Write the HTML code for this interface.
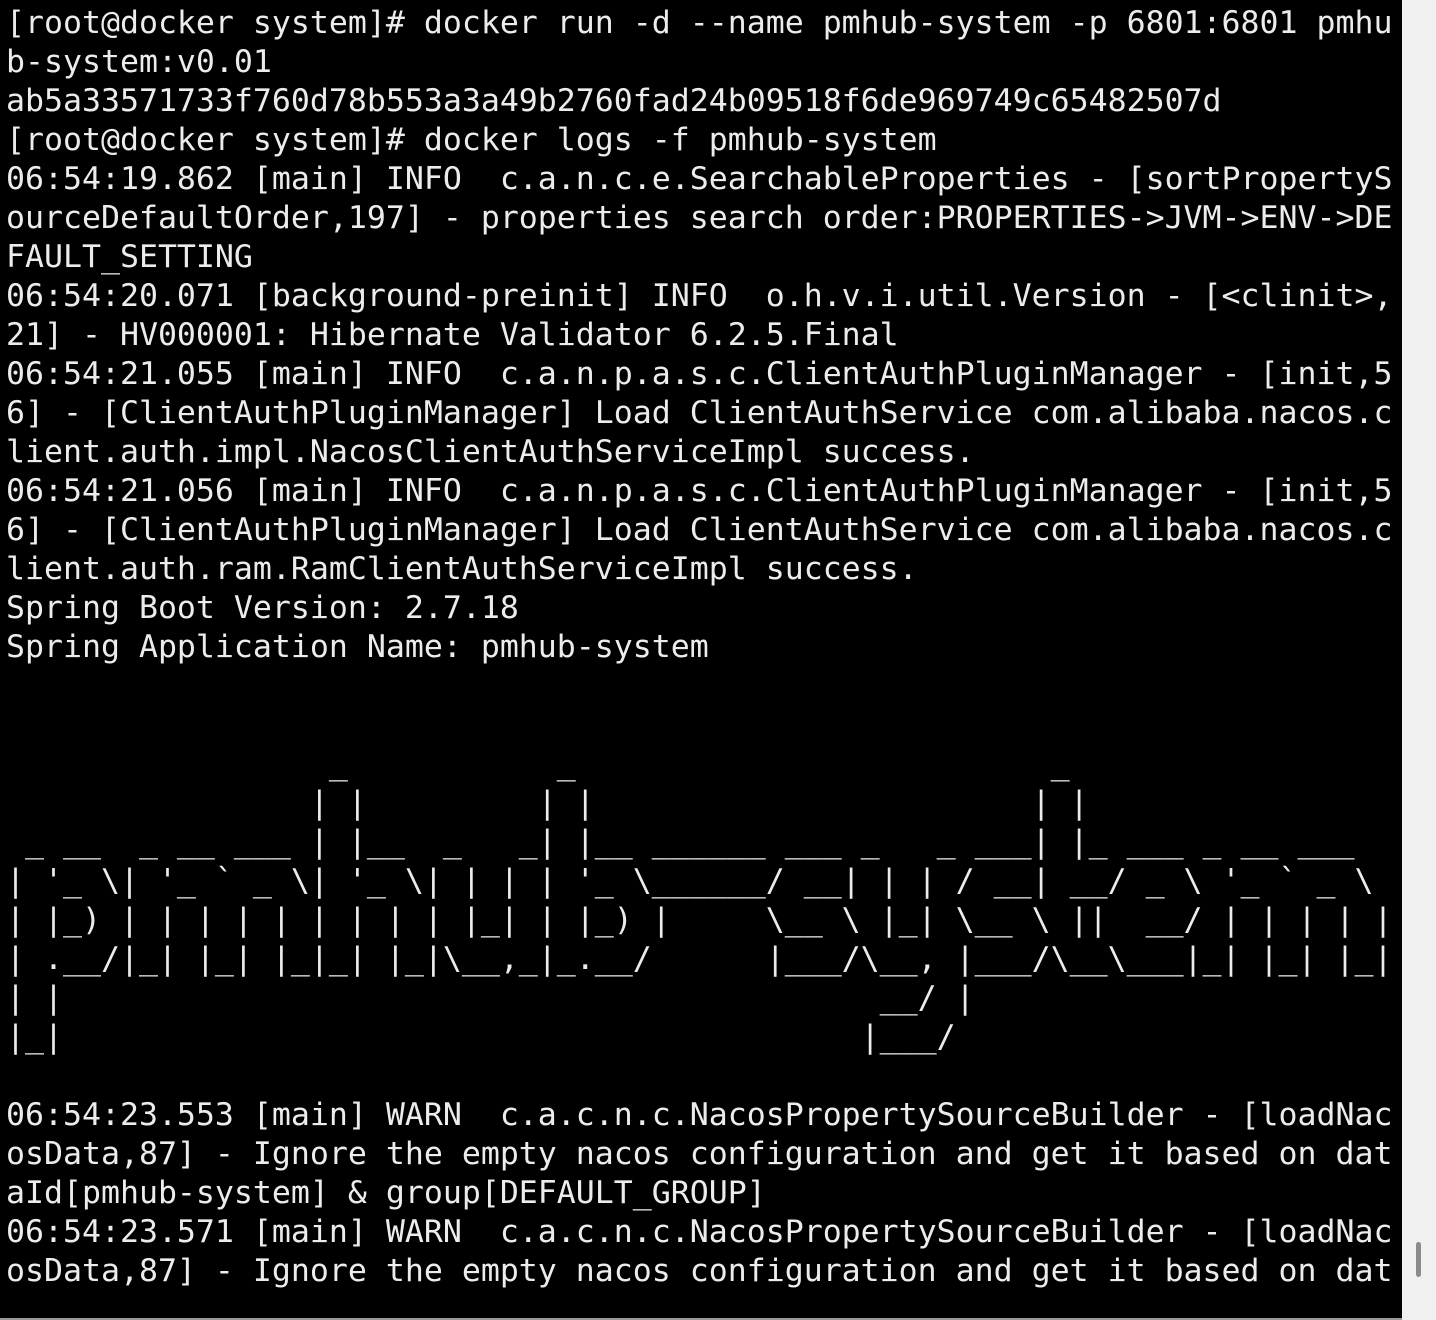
<!DOCTYPE html>
<html><head><meta charset="utf-8">
<style>
html,body{margin:0;padding:0;}
body{width:1436px;height:1320px;background:#000;position:relative;overflow:hidden;}
pre{position:absolute;left:6px;top:4px;margin:0;font-family:"DejaVu Sans Mono","Liberation Mono",monospace;font-size:31.56px;line-height:39px;color:#ececec;white-space:pre;}
.sb{position:absolute;left:1402px;top:0;width:34px;height:1320px;background:#f0f0f0;}
.th{position:absolute;left:1416px;top:1242px;width:5px;height:35px;background:#8a8a8a;border-radius:3px;}
.bl{position:absolute;left:0;top:1318px;width:1402px;height:2px;background:#9a9a9a;}
</style></head><body>
<pre>[root@docker system]# docker run -d --name pmhub-system -p 6801:6801 pmhu
b-system:v0.01
ab5a33571733f760d78b553a3a49b2760fad24b09518f6de969749c65482507d
[root@docker system]# docker logs -f pmhub-system
06:54:19.862 [main] INFO  c.a.n.c.e.SearchableProperties - [sortPropertyS
ourceDefaultOrder,197] - properties search order:PROPERTIES-&gt;JVM-&gt;ENV-&gt;DE
FAULT_SETTING
06:54:20.071 [background-preinit] INFO  o.h.v.i.util.Version - [&lt;clinit&gt;,
21] - HV000001: Hibernate Validator 6.2.5.Final
06:54:21.055 [main] INFO  c.a.n.p.a.s.c.ClientAuthPluginManager - [init,5
6] - [ClientAuthPluginManager] Load ClientAuthService com.alibaba.nacos.c
lient.auth.impl.NacosClientAuthServiceImpl success.
06:54:21.056 [main] INFO  c.a.n.p.a.s.c.ClientAuthPluginManager - [init,5
6] - [ClientAuthPluginManager] Load ClientAuthService com.alibaba.nacos.c
lient.auth.ram.RamClientAuthServiceImpl success.
Spring Boot Version: 2.7.18
Spring Application Name: pmhub-system


                 _           _                         _
                | |         | |                       | |
 _ __  _ __ ___ | |__  _   _| |__ ______ ___ _   _ ___| |_ ___ _ __ ___
| '_ \| '_ ` _ \| '_ \| | | | '_ \______/ __| | | / __| __/ _ \ '_ ` _ \
| |_) | | | | | | | | | |_| | |_) |     \__ \ |_| \__ \ ||  __/ | | | | |
| .__/|_| |_| |_|_| |_|\__,_|_.__/      |___/\__, |___/\__\___|_| |_| |_|
| |                                           __/ |
|_|                                          |___/

06:54:23.553 [main] WARN  c.a.c.n.c.NacosPropertySourceBuilder - [loadNac
osData,87] - Ignore the empty nacos configuration and get it based on dat
aId[pmhub-system] &amp; group[DEFAULT_GROUP]
06:54:23.571 [main] WARN  c.a.c.n.c.NacosPropertySourceBuilder - [loadNac
osData,87] - Ignore the empty nacos configuration and get it based on dat</pre>
<div class="sb"></div>
<div class="th"></div>
<div class="bl"></div>
</body></html>
